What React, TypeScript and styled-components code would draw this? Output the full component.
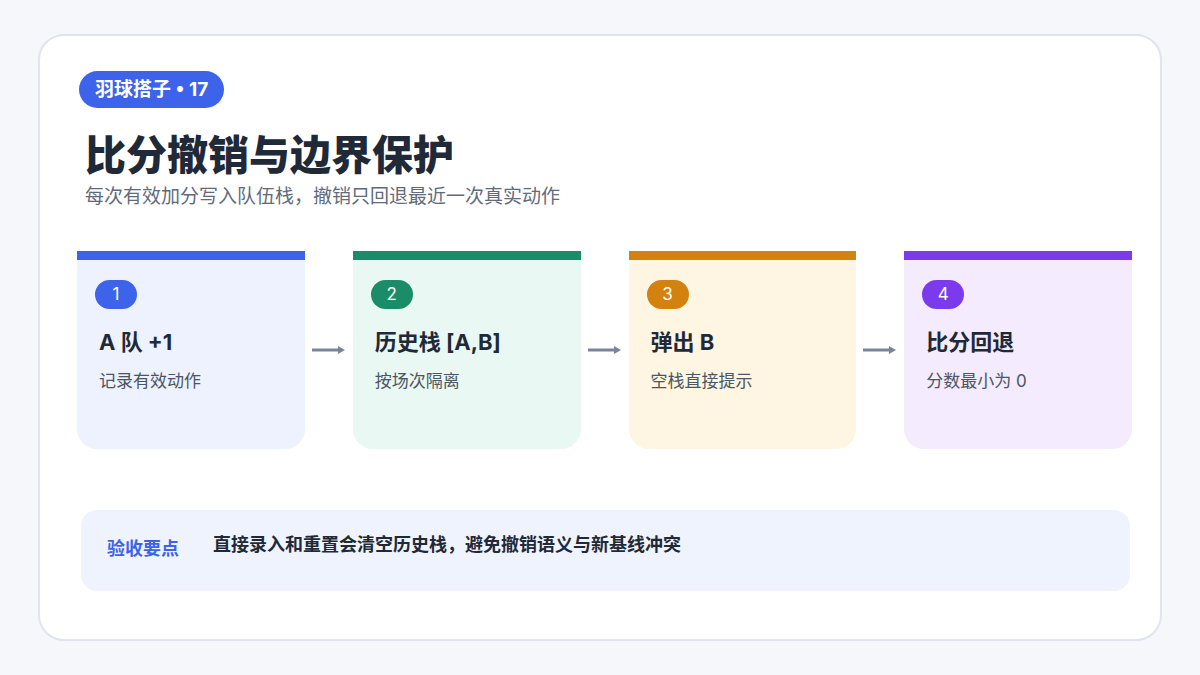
import React from "react";
import styled, { createGlobalStyle } from "styled-components";

const G = createGlobalStyle`
  html,body{margin:0;padding:0;background:#f5f7fb;font-family:Inter,"Noto Sans CJK SC",sans-serif;}
`;
const Page = styled.div`width:1200px;height:675px;box-sizing:border-box;padding:34px 38px;`;
const Panel = styled.div`
  height:607px;box-sizing:border-box;background:#fff;border:2px solid #dfe4ee;border-radius:26px;
  padding:35px 28px 0 37px;display:flex;flex-direction:column;
`;
const Tag = styled.div`
  align-self:flex-start;background:#3d63ea;color:#fff;font-weight:700;font-size:19px;
  height:37px;line-height:37px;padding:0 16px;border-radius:19px;margin-left:2px;
`;
const Title = styled.h1`margin:20px 0 0 8px;font-size:41px;font-weight:800;color:#1f2937;line-height:54px;`;
const Sub = styled.div`margin:2px 0 0 8px;font-size:19px;color:#5f6b7d;line-height:26px;`;
const Row = styled.div`display:flex;align-items:center;margin-top:41px;`;
const Card = styled.div<{ $bar: string; $bg: string }>`
  width:228px;height:198px;box-sizing:border-box;border-top:9px solid ${p => p.$bar};
  background:${p => p.$bg};border-radius:0 0 20px 20px;padding:20px 18px;
`;
const Num = styled.div<{ $c: string }>`
  width:42px;height:29px;border-radius:15px;background:${p => p.$c};color:#fff;
  font-size:17px;text-align:center;line-height:29px;
`;
const CT = styled.div`margin-top:18px;margin-left:4px;font-size:22px;font-weight:700;color:#1f2937;line-height:30px;`;
const CD = styled.div`margin-top:12px;margin-left:4px;font-size:17px;color:#4b5563;line-height:24px;`;
const Arrow = styled.div`width:48px;display:flex;justify-content:center;`;
const Foot = styled.div`
  margin:61px 2px 0 4px;height:81px;background:#eef3fe;border-radius:16px;display:flex;
  padding:22px 26px;box-sizing:border-box;gap:34px;font-size:18px;
`;
const FL = styled.div`color:#3d63ea;font-weight:700;margin-top:2px;`;
const FT = styled.div`color:#1f2937;font-weight:700;margin-top:-2px;`;

const cards = [
  ["1", "A 队 +1", "记录有效动作", "#3d63ea", "#edf2fe"],
  ["2", "历史栈 [A,B]", "按场次隔离", "#1a8c68", "#e9f8f2"],
  ["3", "弹出 B", "空栈直接提示", "#d4820f", "#fef6e2"],
  ["4", "比分回退", "分数最小为 0", "#7c3aed", "#f4ebfe"],
];

export default function App() {
  return (
    <Page>
      <G />
      <Panel>
        <Tag>羽球搭子 • 17</Tag>
        <Title>比分撤销与边界保护</Title>
        <Sub>每次有效加分写入队伍栈，撤销只回退最近一次真实动作</Sub>
        <Row>
          {cards.map((c, i) => (
            <React.Fragment key={i}>
              {i > 0 && (
                <Arrow>
                  <svg width="34" height="10" viewBox="0 0 34 10">
                    <path d="M0 5H28" stroke="#7b8496" strokeWidth="3" />
                    <path d="M26 1L33 5L26 9Z" fill="#7b8496" />
                  </svg>
                </Arrow>
              )}
              <Card $bar={c[3]} $bg={c[4]}>
                <Num $c={c[3]}>{c[0]}</Num>
                <CT>{c[1]}</CT>
                <CD>{c[2]}</CD>
              </Card>
            </React.Fragment>
          ))}
        </Row>
        <Foot>
          <FL>验收要点</FL>
          <FT>直接录入和重置会清空历史栈，避免撤销语义与新基线冲突</FT>
        </Foot>
      </Panel>
    </Page>
  );
}
